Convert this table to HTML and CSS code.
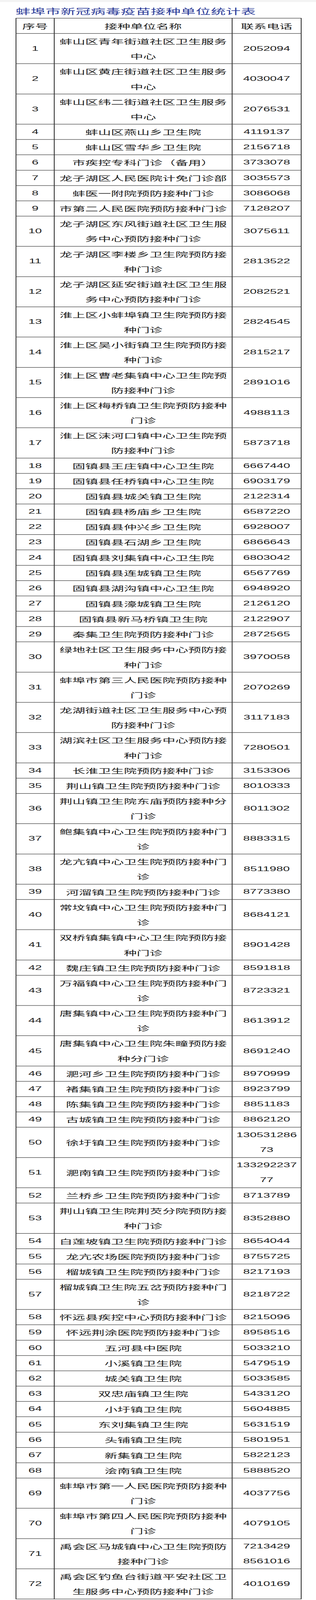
FILE: index.html
```html
<!DOCTYPE html>
<html lang="zh-CN">
<head>
<meta charset="utf-8">
<title>蚌埠市新冠病毒疫苗接种单位统计表</title>
<link rel="stylesheet" href="styles.css">
</head>
<body>
<div class="frame">
<div class="page">
<div class="topbar"></div>
<h1 class="title">蚌埠市新冠病毒疫苗接种单位统计表</h1>
<table class="sheet">
<colgroup><col class="c-no"><col class="c-name"><col class="c-tel"></colgroup>
<thead>
<tr><th>序号</th><th>接种单位名称</th><th>联系电话</th></tr>
</thead>
<tbody>
<tr><td class="no">1</td><td class="name">蚌山区青年街道社区卫生服务中心</td><td class="tel">2052094</td></tr>
<tr><td class="no">2</td><td class="name">蚌山区黄庄街道社区卫生服务中心</td><td class="tel">4030047</td></tr>
<tr><td class="no">3</td><td class="name">蚌山区纬二街道社区卫生服务中心</td><td class="tel">2076531</td></tr>
<tr><td class="no">4</td><td class="name">蚌山区燕山乡卫生院</td><td class="tel">4119137</td></tr>
<tr><td class="no">5</td><td class="name">蚌山区雪华乡卫生院</td><td class="tel">2156718</td></tr>
<tr><td class="no">6</td><td class="name">市疾控专科门诊（备用）</td><td class="tel">3733078</td></tr>
<tr><td class="no">7</td><td class="name">龙子湖区人民医院计免门诊部</td><td class="tel">3035573</td></tr>
<tr><td class="no">8</td><td class="name">蚌医一附院预防接种门诊</td><td class="tel">3086068</td></tr>
<tr><td class="no">9</td><td class="name">市第二人民医院预防接种门诊</td><td class="tel">7128207</td></tr>
<tr><td class="no">10</td><td class="name">龙子湖区东风街道社区卫生服务中心预防接种门诊</td><td class="tel">3075611</td></tr>
<tr><td class="no">11</td><td class="name">龙子湖区李楼乡卫生院预防接种门诊</td><td class="tel">2813522</td></tr>
<tr><td class="no">12</td><td class="name">龙子湖区延安街道社区卫生服务中心预防接种门诊</td><td class="tel">2082521</td></tr>
<tr><td class="no">13</td><td class="name">淮上区小蚌埠镇卫生院预防接种门诊</td><td class="tel">2824545</td></tr>
<tr><td class="no">14</td><td class="name">淮上区吴小街镇卫生院预防接种门诊</td><td class="tel">2815217</td></tr>
<tr><td class="no">15</td><td class="name">淮上区曹老集镇中心卫生院预防接种门诊</td><td class="tel">2891016</td></tr>
<tr><td class="no">16</td><td class="name">淮上区梅桥镇卫生院预防接种门诊</td><td class="tel">4988113</td></tr>
<tr><td class="no">17</td><td class="name">淮上区沫河口镇中心卫生院预防接种门诊</td><td class="tel">5873718</td></tr>
<tr><td class="no">18</td><td class="name">固镇县王庄镇中心卫生院</td><td class="tel">6667440</td></tr>
<tr><td class="no">19</td><td class="name">固镇县任桥镇中心卫生院</td><td class="tel">6903179</td></tr>
<tr><td class="no">20</td><td class="name">固镇县城关镇卫生院</td><td class="tel">2122314</td></tr>
<tr><td class="no">21</td><td class="name">固镇县杨庙乡卫生院</td><td class="tel">6587220</td></tr>
<tr><td class="no">22</td><td class="name">固镇县仲兴乡卫生院</td><td class="tel">6928007</td></tr>
<tr><td class="no">23</td><td class="name">固镇县石湖乡卫生院</td><td class="tel">6866643</td></tr>
<tr><td class="no">24</td><td class="name">固镇县刘集镇中心卫生院</td><td class="tel">6803042</td></tr>
<tr><td class="no">25</td><td class="name">固镇县连城镇卫生院</td><td class="tel">6567769</td></tr>
<tr><td class="no">26</td><td class="name">固镇县湖沟镇中心卫生院</td><td class="tel">6948920</td></tr>
<tr><td class="no">27</td><td class="name">固镇县濠城镇卫生院</td><td class="tel">2126120</td></tr>
<tr><td class="no">28</td><td class="name">固镇县新马桥镇卫生院</td><td class="tel">2122907</td></tr>
<tr><td class="no">29</td><td class="name">秦集卫生院预防接种门诊</td><td class="tel">2872565</td></tr>
<tr><td class="no">30</td><td class="name">绿地社区卫生服务中心预防接种门诊</td><td class="tel">3970058</td></tr>
<tr><td class="no">31</td><td class="name">蚌埠市第三人民医院预防接种门诊</td><td class="tel">2070269</td></tr>
<tr><td class="no">32</td><td class="name">龙湖街道社区卫生服务中心预防接种门诊</td><td class="tel">3117183</td></tr>
<tr><td class="no">33</td><td class="name">湖滨社区卫生服务中心预防接种门诊</td><td class="tel">7280501</td></tr>
<tr><td class="no">34</td><td class="name">长淮卫生院预防接种门诊</td><td class="tel">3153306</td></tr>
<tr><td class="no">35</td><td class="name">荆山镇卫生院预防接种门诊</td><td class="tel">8010333</td></tr>
<tr><td class="no">36</td><td class="name">荆山镇卫生院东庙预防接种分门诊</td><td class="tel">8011302</td></tr>
<tr><td class="no">37</td><td class="name">鲍集镇中心卫生院预防接种门诊</td><td class="tel">8883315</td></tr>
<tr><td class="no">38</td><td class="name">龙亢镇中心卫生院预防接种门诊</td><td class="tel">8511980</td></tr>
<tr><td class="no">39</td><td class="name">河溜镇卫生院预防接种门诊</td><td class="tel">8773380</td></tr>
<tr><td class="no">40</td><td class="name">常坟镇中心卫生院预防接种门诊</td><td class="tel">8684121</td></tr>
<tr><td class="no">41</td><td class="name">双桥镇集镇中心卫生院预防接种门诊</td><td class="tel">8901428</td></tr>
<tr><td class="no">42</td><td class="name">魏庄镇卫生院预防接种门诊</td><td class="tel">8591818</td></tr>
<tr><td class="no">43</td><td class="name">万福镇中心卫生院预防接种门诊</td><td class="tel">8723321</td></tr>
<tr><td class="no">44</td><td class="name">唐集镇中心卫生院预防接种门诊</td><td class="tel">8613912</td></tr>
<tr><td class="no">45</td><td class="name">唐集镇中心卫生院朱疃预防接种分门诊</td><td class="tel">8691240</td></tr>
<tr><td class="no">46</td><td class="name">淝河乡卫生院预防接种门诊</td><td class="tel">8970999</td></tr>
<tr><td class="no">47</td><td class="name">褚集镇卫生院预防接种门诊</td><td class="tel">8923799</td></tr>
<tr><td class="no">48</td><td class="name">陈集镇卫生院预防接种门诊</td><td class="tel">8851183</td></tr>
<tr><td class="no">49</td><td class="name">古城镇卫生院预防接种门诊</td><td class="tel">8862120</td></tr>
<tr><td class="no">50</td><td class="name">徐圩镇卫生院预防接种门诊</td><td class="tel">13053128673</td></tr>
<tr><td class="no">51</td><td class="name">淝南镇卫生院预防接种门诊</td><td class="tel">13329223777</td></tr>
<tr><td class="no">52</td><td class="name">兰桥乡卫生院预防接种门诊</td><td class="tel">8713789</td></tr>
<tr><td class="no">53</td><td class="name">荆山镇卫生院荆芡分院预防接种门诊</td><td class="tel">8352880</td></tr>
<tr><td class="no">54</td><td class="name">白莲坡镇卫生院预防接种门诊</td><td class="tel">8654044</td></tr>
<tr><td class="no">55</td><td class="name">龙亢农场医院预防接种门诊</td><td class="tel">8755725</td></tr>
<tr><td class="no">56</td><td class="name">榴城镇卫生院预防接种门诊</td><td class="tel">8217193</td></tr>
<tr><td class="no">57</td><td class="name">榴城镇卫生院五岔预防接种门诊</td><td class="tel">8218722</td></tr>
<tr><td class="no">58</td><td class="name">怀远县疾控中心预防接种门诊</td><td class="tel">8215096</td></tr>
<tr><td class="no">59</td><td class="name">怀远荆涂医院预防接种门诊</td><td class="tel">8958516</td></tr>
<tr><td class="no">60</td><td class="name">五河县中医院</td><td class="tel">5033210</td></tr>
<tr><td class="no">61</td><td class="name">小溪镇卫生院</td><td class="tel">5479519</td></tr>
<tr><td class="no">62</td><td class="name">城关镇卫生院</td><td class="tel">5033585</td></tr>
<tr><td class="no">63</td><td class="name">双忠庙镇卫生院</td><td class="tel">5433120</td></tr>
<tr><td class="no">64</td><td class="name">小圩镇卫生院</td><td class="tel">5604885</td></tr>
<tr><td class="no">65</td><td class="name">东刘集镇卫生院</td><td class="tel">5631519</td></tr>
<tr><td class="no">66</td><td class="name">头铺镇卫生院</td><td class="tel">5801951</td></tr>
<tr><td class="no">67</td><td class="name">新集镇卫生院</td><td class="tel">5822123</td></tr>
<tr><td class="no">68</td><td class="name">浍南镇卫生院</td><td class="tel">5888520</td></tr>
<tr><td class="no">69</td><td class="name">蚌埠市第一人民医院预防接种门诊</td><td class="tel">4037756</td></tr>
<tr><td class="no">70</td><td class="name">蚌埠市第四人民医院预防接种门诊</td><td class="tel">4079105</td></tr>
<tr><td class="no">71</td><td class="name">禹会区马城镇中心卫生院预防接种门诊</td><td class="tel">7213429<br>8561016</td></tr>
<tr><td class="no">72</td><td class="name">禹会区钓鱼台街道平安社区卫生服务中心预防接种门诊</td><td class="tel">4010169</td></tr>
</tbody>
</table>
</div>
</div>
<script src="script.js"></script>
</body>
</html>
```

FILE: styles.css
```css
html, body {
  margin: 0;
  padding: 0;
  background: #ffffff;
}

body {
  font-family: "Noto Sans CJK SC", "Liberation Sans", sans-serif;
  color: #1c1c1c;
}

.frame {
  overflow: hidden;
}

.page {
  height: 7743px;
  transform-origin: 0 0;
}

.topbar {
  height: 10px;
  background: #f3f3f3;
}

.title {
  margin: 0;
  padding: 19px 0 8px 40px;
  font-size: 38px;
  line-height: 50px;
  font-weight: 400;
  color: #2a3a98;
  letter-spacing: 0.5px;
}

.sheet {
  margin-left: 40px;
  width: 731px;
  table-layout: fixed;
  border-collapse: collapse;
  border: 2px solid #1a1a1a;
}

.c-no { width: 98px; }
.c-name { width: 456px; }
.c-tel { width: 177px; }

.sheet th,
.sheet td {
  border: 2px solid #222222;
  padding: 0 8px;
  line-height: 72.16px;
  height: 72.16px;
  font-size: 33px;
  font-weight: 400;
  text-align: center;
  vertical-align: middle;
}

.sheet .no {
  font-family: "Liberation Sans", "Noto Sans CJK SC", sans-serif;
  font-size: 31px;
  padding: 0 4px;
}

.sheet .tel {
  font-family: "Liberation Sans", "Noto Sans CJK SC", sans-serif;
  font-size: 31px;
  padding: 0 4px;
  word-break: break-all;
}

.sheet .name {
  padding: 0 9px;
}
```

FILE: script.js
```js
(function () {
  var frame = document.querySelector('.frame');
  var page = document.querySelector('.page');
  var full = page.offsetHeight;
  var vh = window.innerHeight;
  if (vh > 0 && vh < full) {
    var k = vh / full;
    page.style.transform = 'scaleY(' + k + ')';
    frame.style.height = vh + 'px';
  }
})();
```
